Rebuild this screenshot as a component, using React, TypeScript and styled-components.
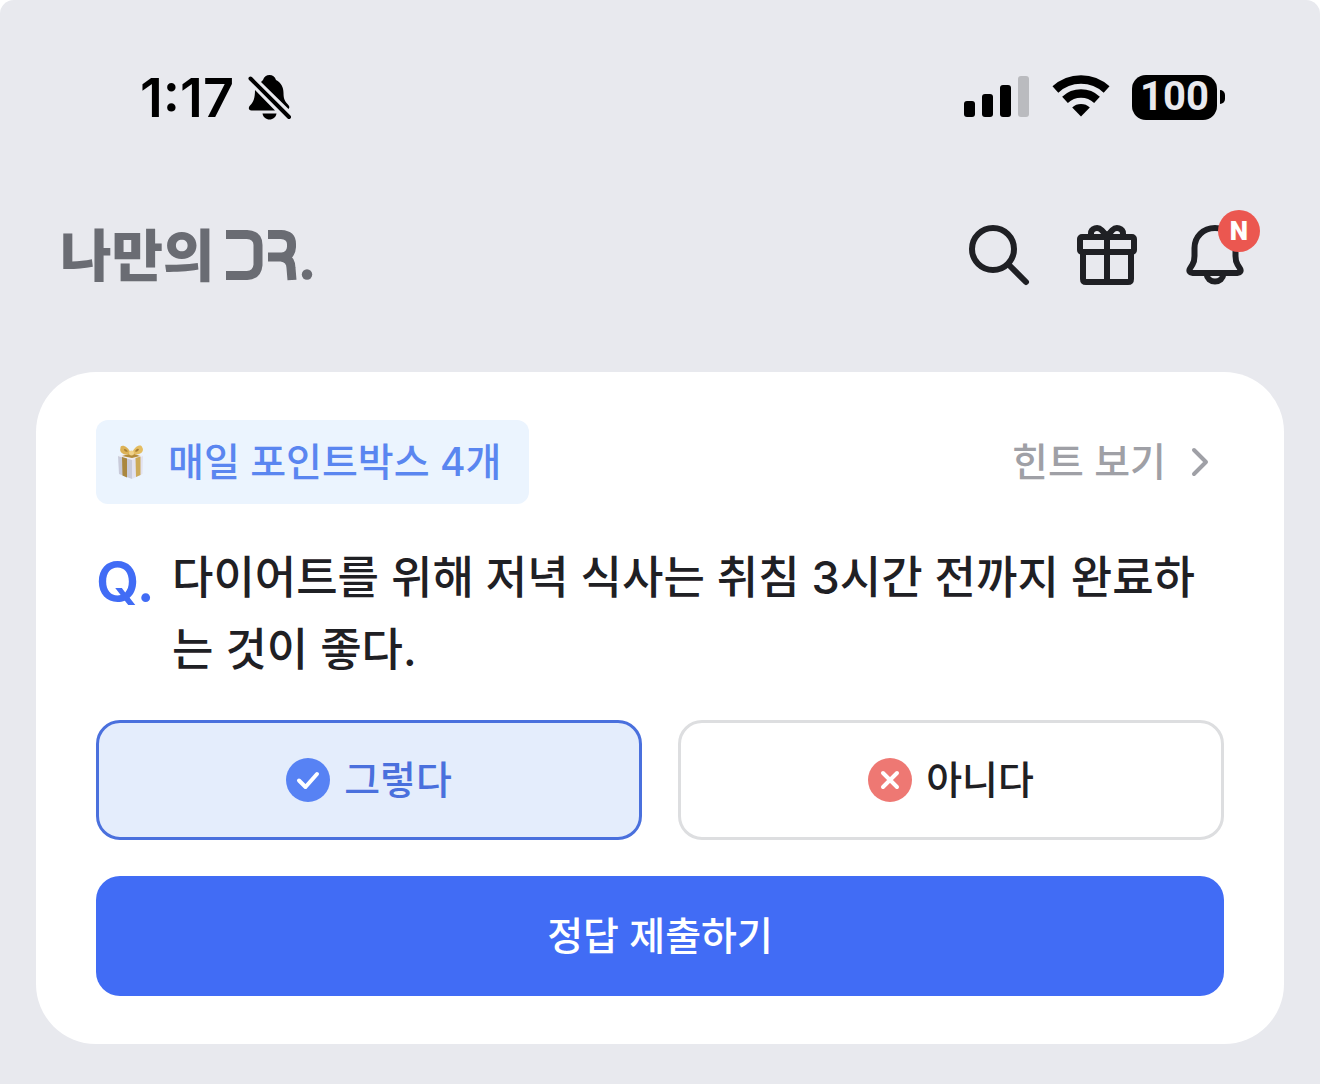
import React, { useState } from "react";
import styled, { createGlobalStyle } from "styled-components";

const sans = `Inter, "Noto Sans CJK KR", sans-serif`;
const korean = `"Noto Sans CJK KR", sans-serif`;
const numeric = `Roboto, sans-serif`;

const GlobalStyle = createGlobalStyle`
  * { box-sizing: border-box; }
  body { margin: 0; background: #fff; font-family: ${sans}; }
  button, input { font: inherit; }
`;

const Screen = styled.div`
  min-height: 100vh;
  padding-bottom: 40px;
  background: #e8e9ee;
  border-radius: 14px 14px 0 0;
`;

const StatusBar = styled.div`
  display: flex;
  align-items: center;
  justify-content: space-between;
  height: 194px;
  padding: 0 95px 0 140px;
  color: #000;
`;

const StatusGroup = styled.div<{ $gap: number }>`
  display: flex;
  align-items: center;
  gap: ${(p) => p.$gap}px;
`;

const Time = styled.span`
  padding-top: 2px;
  font: 600 54px/60px ${sans};
`;

const Battery = styled.div`
  display: flex;
  align-items: center;
  gap: 3px;
`;

const BatteryBody = styled.span`
  display: flex;
  align-items: center;
  justify-content: center;
  width: 85px;
  height: 45px;
  border-radius: 14px;
  background: #000;
  color: #e8e9ee;
  font: 700 40px/46px ${numeric};
`;

const BatteryTip = styled.span`
  width: 5px;
  height: 14px;
  border-radius: 0 6px 6px 0;
  background: #000;
`;

const Header = styled.header`
  display: flex;
  align-items: center;
  justify-content: space-between;
  height: 122px;
  padding: 0 69px 0 60px;
`;

const Logo = styled.a`
  display: flex;
  align-items: center;
  gap: 10px;
  color: #6a6c73;
  text-decoration: none;
  font: 900 56px/64px ${korean};
`;

const LogoName = styled.span`
  padding-bottom: 6px;
`;

const HeaderActions = styled.nav`
  display: flex;
  gap: 36px;
`;

const IconButton = styled.button`
  position: relative;
  width: 72px;
  height: 72px;
  padding: 0;
  border: 0;
  background: none;
  color: #1f2024;
  cursor: pointer;

  svg { display: block; }
`;

const Badge = styled.span`
  position: absolute;
  top: -9px;
  right: -9px;
  width: 42px;
  height: 42px;
  border-radius: 50%;
  background: #eb5750;
  color: #fff;
  font: 900 26px/42px ${numeric};
  text-align: center;
`;

const Card = styled.main`
  display: flex;
  flex-direction: column;
  margin: 56px 36px 0;
  padding: 48px 60px;
  border-radius: 60px;
  background: #fff;
`;

const CardTop = styled.div`
  display: flex;
  align-items: center;
  justify-content: space-between;
`;

const Chip = styled.span`
  display: flex;
  align-items: center;
  gap: 18px;
  height: 84px;
  padding: 0 28px 0 18px;
  border-radius: 12px;
  background: #ebf4fe;
  color: #5a86f0;
  font-size: 39px;
  font-weight: 500;
  line-height: 60px;
`;

const HintLink = styled.a`
  display: flex;
  align-items: center;
  gap: 16px;
  padding-right: 6px;
  color: #9fa0a6;
  font-size: 39px;
  font-weight: 500;
  line-height: 60px;
  text-decoration: none;
`;

const Question = styled.div`
  display: grid;
  grid-template-columns: 76px 1fr;
  padding: 38px 0 34px;
  color: #1f2024;
`;

const QuestionMark = styled.span`
  color: #416cf5;
  font-size: 56px;
  font-weight: 600;
  line-height: 80px;
`;

const QuestionText = styled.p`
  margin: 0;
  font-size: 45px;
  font-weight: 500;
  line-height: 72px;
`;

const Form = styled.form`
  display: flex;
  flex-direction: column;
  gap: 36px;
`;

const Options = styled.div`
  display: grid;
  grid-template-columns: 1fr 1fr;
  gap: 36px;
`;

const Option = styled.label<{ $active: boolean }>`
  position: relative;
  display: flex;
  align-items: center;
  justify-content: center;
  gap: 14px;
  height: 120px;
  border: 3px solid ${(p) => (p.$active ? "#4a70dd" : "#dddee0")};
  border-radius: 24px;
  background: ${(p) => (p.$active ? "#e4edfc" : "#fff")};
  color: ${(p) => (p.$active ? "#4a70dd" : "#1f2024")};
  font-size: 39px;
  font-weight: 500;
  line-height: 60px;
  cursor: pointer;
`;

const HiddenRadio = styled.input`
  position: absolute;
  inset: 0;
  margin: 0;
  opacity: 0;
  cursor: pointer;
`;

const Submit = styled.button`
  height: 120px;
  padding: 0;
  border: 0;
  border-radius: 24px;
  background: #416cf5;
  color: #fff;
  font-size: 39px;
  font-weight: 500;
  line-height: 60px;
  cursor: pointer;
`;

const SilentIcon = () => (
  <svg width="44" height="48" viewBox="0 0 44 48" aria-hidden="true">
    <path d="M13 9L15 7C16 3.500 18.500 2 21.500 2S27 3.500 28 7C33 9.500 35.500 14 35.500 20C35.500 26 37 28.500 39.500 31C41.500 33 42 34.500 40.500 36Z" />
    <path d="M7 17L27 37.500H3.500C0.500 37.500 0 34.500 2 32.500C5.500 29 7 25 7 17Z" />
    <path d="M14.500 40.500H28.500C28 44 25 46.500 21.500 46.500S15 44 14.500 40.500Z" />
    <path d="M2.500 5.500L41 44" stroke="#000" strokeWidth="4" strokeLinecap="round" />
  </svg>
);

const SignalIcon = () => (
  <svg width="66" height="44" viewBox="0 0 66 44" aria-hidden="true">
    <rect x="0" y="26" width="11" height="16" rx="3" />
    <rect x="18" y="19" width="11" height="23" rx="3" />
    <rect x="36" y="10" width="11" height="32" rx="3" />
    <rect x="54" y="1" width="11" height="41" rx="3" fill="#babbbf" />
  </svg>
);

const WifiIcon = () => (
  <svg width="58" height="46" viewBox="0 0 58 46" fill="none" stroke="#000" aria-hidden="true">
    <path d="M3.400 15.500A37.600 37.600 0 0 1 54.600 15.500" strokeWidth="8.600" />
    <path d="M13 25.800A23.500 23.500 0 0 1 45 25.800" strokeWidth="8.400" />
    <path d="M20.200 33.500A13 13 0 0 1 37.800 33.500L29 42.500Z" fill="#000" stroke="none" />
  </svg>
);

const LogoMark = () => (
  <svg width="88" height="56" viewBox="0 0 88 56" fill="none" stroke="currentColor" strokeWidth="9" aria-hidden="true">
    <path d="M1 7.500H22Q33 8 33 18V38Q32 48 22 48.500H1" />
    <path d="M43 7.500H56Q66.500 8 66.500 17V20Q66 29 57 30H43M56 30Q66 31 66 41L67 53" />
    <circle cx="82" cy="47.500" r="5.200" fill="currentColor" stroke="none" />
  </svg>
);

const line = { fill: "none", stroke: "currentColor", strokeWidth: 6, strokeLinecap: "round", strokeLinejoin: "round" } as const;

const SearchIcon = () => (
  <svg width="72" height="72" viewBox="0 0 72 72" {...line} aria-hidden="true">
    <circle cx="30" cy="30" r="21" />
    <path d="M45.500 45.500L63 63" />
  </svg>
);

const GiftIcon = () => (
  <svg width="72" height="72" viewBox="0 0 72 72" {...line} aria-hidden="true">
    <rect x="9" y="18" width="54" height="15" rx="2" />
    <path d="M12 33V60Q12 63 15 63H57Q60 63 60 60V33M36 18V63" />
    <path d="M20 17V14.500C20 9 27 7.500 30.500 11L36 17L41.500 11C45 7.500 52 9 52 14.500V17" />
  </svg>
);

const BellIcon = () => (
  <svg width="72" height="72" viewBox="0 0 72 72" {...line} aria-hidden="true">
    <path d="M36 9C24 9 15.500 18 15.500 29V37C15.500 41 15 43 13.500 45.500L11 49.500C9.500 52 11 54 13.500 54H58.500C61 54 62.500 52 61 49.500L58.500 45.500C57 43 56.500 41 56.500 37V29C56.500 18 48 9 36 9Z" />
    <path d="M27.500 55C28 59.500 31.500 62.500 36 62.500S44 59.500 44.500 55" />
  </svg>
);

const GiftBoxIcon = () => (
  <svg width="36" height="36" viewBox="0 0 36 36" aria-hidden="true">
    <path d="M4 12L18 15V35L5 30Z" fill="#c9cbda" />
    <path d="M29 12L18 15V35L28.500 30Z" fill="#e2e2f0" />
    <path d="M4 12L17 8L29 12L18 16Z" fill="#efedf2" />
    <path d="M8 13L13 14.500V33.500L8.500 31.500Z" fill="#aa873f" />
    <path d="M21.500 14L26.500 12.500V31L22 33Z" fill="#cdaa58" />
    <path d="M8 12L18 9L26 12L18 14Z" fill="#b48c3a" />
    <path d="M17 10C14 1 6 0 6.500 4C5 8 9 12 17 10Z" fill="#dcb257" />
    <path d="M18 10C20 1 28 0 28 3C31 7 27 12 18 10Z" fill="#e4bd62" />
    <path d="M14 7.500C12.500 5.500 11 4.500 10 5.500C10 7 11.500 8 14 7.500ZM21 7.500C22 5 24 4 25 5.500C24.500 7 23 8 21 7.500Z" fill="#a87e34" />
    <circle cx="17.500" cy="9" r="2.500" fill="#f0d28a" />
  </svg>
);

const ChevronIcon = () => (
  <svg width="36" height="36" viewBox="0 0 36 36" fill="none" stroke="currentColor" strokeWidth="4" strokeLinecap="round" strokeLinejoin="round" aria-hidden="true">
    <path d="M12 6L24 18L12 30" />
  </svg>
);

const CheckIcon = () => (
  <svg width="44" height="44" viewBox="0 0 44 44" fill="none" stroke="#fff" strokeWidth="4" strokeLinecap="round" strokeLinejoin="round" aria-hidden="true">
    <circle cx="22" cy="22" r="22" fill="#5782f4" stroke="none" />
    <path d="M13 22.500L19.500 29L31 16" />
  </svg>
);

const CrossIcon = () => (
  <svg width="44" height="44" viewBox="0 0 44 44" fill="none" stroke="#fff" strokeWidth="4" strokeLinecap="round" aria-hidden="true">
    <circle cx="22" cy="22" r="22" fill="#ee7873" stroke="none" />
    <path d="M15 15L29 29M29 15L15 29" />
  </svg>
);

const options = [
  { value: "yes", label: "그렇다", Icon: CheckIcon },
  { value: "no", label: "아니다", Icon: CrossIcon },
];

export default function App() {
  const [answer, setAnswer] = useState("yes");

  return (
    <>
      <GlobalStyle />
      <Screen>
        <StatusBar>
          <StatusGroup $gap={14}>
            <Time>1:17</Time>
            <SilentIcon />
          </StatusGroup>
          <StatusGroup $gap={22}>
            <SignalIcon />
            <WifiIcon />
            <Battery>
              <BatteryBody>100</BatteryBody>
              <BatteryTip />
            </Battery>
          </StatusGroup>
        </StatusBar>

        <Header>
          <Logo href="#">
            <LogoName>나만의</LogoName>
            <LogoMark />
          </Logo>
          <HeaderActions>
            <IconButton aria-label="검색"><SearchIcon /></IconButton>
            <IconButton aria-label="선물"><GiftIcon /></IconButton>
            <IconButton aria-label="알림">
              <BellIcon />
              <Badge>N</Badge>
            </IconButton>
          </HeaderActions>
        </Header>

        <Card>
          <CardTop>
            <Chip>
              <GiftBoxIcon />
              매일 포인트박스 4개
            </Chip>
            <HintLink href="#">
              힌트 보기
              <ChevronIcon />
            </HintLink>
          </CardTop>

          <Question>
            <QuestionMark>Q.</QuestionMark>
            <QuestionText id="question">
              다이어트를 위해 저녁 식사는 취침 3시간 전까지 완료하는 것이 좋다.
            </QuestionText>
          </Question>

          <Form onSubmit={(e) => e.preventDefault()}>
            <Options role="radiogroup" aria-labelledby="question">
              {options.map(({ value, label, Icon }) => (
                <Option key={value} $active={answer === value}>
                  <HiddenRadio
                    type="radio"
                    name="answer"
                    value={value}
                    checked={answer === value}
                    onChange={() => setAnswer(value)}
                  />
                  <Icon />
                  {label}
                </Option>
              ))}
            </Options>
            <Submit type="submit">정답 제출하기</Submit>
          </Form>
        </Card>
      </Screen>
    </>
  );
}
